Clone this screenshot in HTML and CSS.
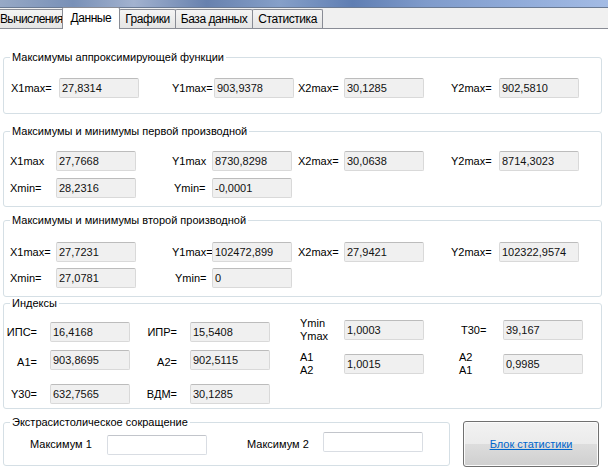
FILE: index.html
```html
<!DOCTYPE html>
<html lang="ru">
<head>
<meta charset="utf-8">
<title>Данные</title>
<link rel="stylesheet" href="styles.css">
</head>
<body>
<div class="glass"></div>
<div class="tabstrip">
  <div class="tab first">Вычисления</div>
  <div class="tab on">Данные</div>
  <div class="tab">Графики</div>
  <div class="tab">База данных</div>
  <div class="tab">Статистика</div>
</div>
<main class="page">
  <fieldset class="grp g1">
    <legend>Максимумы аппроксимирующей функции</legend>
    <div class="row">
      <span class="c1">X1max=</span><div class="box">27,8314</div>
      <span class="c2">Y1max=</span><div class="box">903,9378</div>
      <span class="c3">X2max=</span><div class="box">30,1285</div>
      <span class="c4">Y2max=</span><div class="box">902,5810</div>
    </div>
  </fieldset>

  <fieldset class="grp g2">
    <legend>Максимумы и минимумы первой производной</legend>
    <div class="rows">
      <div class="row">
        <span class="c1">X1max</span><div class="box">27,7668</div>
        <span class="c2">Y1max</span><div class="box">8730,8298</div>
        <span class="c3">X2max=</span><div class="box">30,0638</div>
        <span class="c4">Y2max=</span><div class="box">8714,3023</div>
      </div>
      <div class="row">
        <span class="c1">Xmin=</span><div class="box">28,2316</div>
        <span class="c2 in2">Ymin=</span><div class="box">-0,0001</div>
      </div>
    </div>
  </fieldset>

  <fieldset class="grp g3">
    <legend>Максимумы и минимумы второй производной</legend>
    <div class="rows">
      <div class="row">
        <span class="c1">X1max=</span><div class="box">27,7231</div>
        <span class="c2">Y1max=</span><div class="box">102472,899</div>
        <span class="c3">X2max=</span><div class="box">27,9421</div>
        <span class="c4">Y2max=</span><div class="box">102322,9574</div>
      </div>
      <div class="row">
        <span class="c1">Xmin=</span><div class="box">27,0781</div>
        <span class="c2 in3">Ymin=</span><div class="box">0</div>
      </div>
    </div>
  </fieldset>

  <fieldset class="grp g4">
    <legend>Индексы</legend>
    <div class="idx">
      <div class="col left">
        <div class="row">
          <span class="ll">ИПС=</span><div class="box">16,4168</div>
          <span class="lm">ИПР=</span><div class="box">15,5408</div>
        </div>
        <div class="row">
          <span class="ll low">A1=</span><div class="box">903,8695</div>
          <span class="lm low">A2=</span><div class="box">902,5115</div>
        </div>
        <div class="row">
          <span class="ll">Y30=</span><div class="box">632,7565</div>
          <span class="lm">ВДМ=</span><div class="box">30,1285</div>
        </div>
      </div>
      <div class="col right">
        <div class="row">
          <span class="st">Ymin<br>Ymax</span><div class="box">1,0003</div>
          <span class="lt">T30=</span><div class="box">39,167</div>
        </div>
        <div class="row">
          <span class="st">A1<br>A2</span><div class="box">1,0015</div>
          <span class="st2">A2<br>A1</span><div class="box">0,9985</div>
        </div>
      </div>
    </div>
  </fieldset>

  <div class="bottom">
    <fieldset class="grp g5">
      <legend>Экстрасистолическое сокращение</legend>
      <div class="row5">
        <span class="m1">Максимум 1</span><div class="ebox b1"></div>
        <span class="m2">Максимум 2</span><div class="ebox b2"></div>
      </div>
    </fieldset>
    <button class="btn" type="button"><span>Блок статистики</span></button>
  </div>
</main>
</body>
</html>
```

FILE: styles.css
```css
* { box-sizing: border-box; }

html, body {
  margin: 0;
  background: #fff;
}

body {
  width: 608px;
  height: 474px;
  overflow: hidden;
  font-family: "Liberation Sans", Arial, sans-serif;
  font-size: 11px;
  color: #000;
}

.glass {
  height: 8px;
  border-bottom: 1px solid #6a7a93;
  background: linear-gradient(90deg, #97a9c6 0%, #7890b7 12%, #a2b2cf 22%, #6781ae 34%, #86a0c9 46%, #5f7eb3 58%, #7f9bcb 70%, #90abd9 85%, #a3bbe4 100%);
}

.tabstrip {
  display: flex;
  align-items: flex-end;
  height: 21px;
  background: #f0f0f0;
  border-bottom: 1px solid #898c95;
}

.tab {
  height: 19px;
  padding: 1px 5px 0;
  line-height: 17px;
  border: 1px solid #898c95;
  border-bottom: 0;
  border-radius: 2px 2px 0 0;
  background: linear-gradient(#f4f4f4, #e5e5e5);
  font-size: 12px;
  letter-spacing: -0.45px;
  white-space: nowrap;
  margin-right: -1px;
}

.tab.first {
  margin-left: -6px;
  padding-right: 1px;
  letter-spacing: -0.65px;
}

.tab.on {
  position: relative;
  z-index: 1;
  height: 22px;
  margin: 0 -2px -1px;
  padding: 1px 8px 0;
  line-height: 18px;
  background: #fff;
}

.tab.on + .tab { margin-left: 1px; }

.page { display: block; }

.grp {
  margin: 0 0 0 3px;
  width: 599px;
  min-width: 0;
  padding: 0;
  border: 1px solid #d5dfe5;
  border-radius: 3px;
}

.grp legend {
  margin-left: 6px;
  padding: 0 2px;
  line-height: 13px;
  font-size: 11px;
}

.row {
  display: flex;
  align-items: center;
  height: 20px;
  white-space: nowrap;
}

.rows {
  display: flex;
  flex-direction: column;
}

.box {
  flex: none;
  width: 80px;
  height: 20px;
  padding-left: 2px;
  line-height: 18px;
  background: #f0f0f0;
  border: 1px solid #d9d9d9;
  border-top-color: #bcbcbc;
  border-radius: 2px;
  color: #111;
}

/* column labels, groups 2 and 3 */
.c1, .c2, .c3, .c4 { flex: none; }
.c1 { margin-left: 6px; width: 46px; }
.c2 { margin-left: 36px; width: 40px; }
.c3 { margin-left: 6px; width: 46px; }
.c4 { margin-left: 27px; width: 48px; }
.in2 { padding-left: 2px; }
.in3 { padding-left: 3px; }

/* group 1 */
.g1 { margin-top: 22px; padding: 14px 0 15px; }
.g1 .c1 { margin-left: 7px; width: 48px; }
.g1 .c2 { margin-left: 33px; width: 42px; }
.g1 .c3 { margin-left: 4px; width: 46px; }
.g1 .c4 { margin-left: 27px; width: 48px; }

/* group 2 */
.g2 { margin-top: 11px; padding: 13px 0 8px; }
.g2 .rows { gap: 7px; }

/* group 3 */
.g3 { margin-top: 7px; padding: 15px 0 8px; }
.g3 .rows { gap: 6px; }

/* group 4 */
.g4 { margin-top: 0; padding: 0 0 4px; }
.idx { display: flex; align-items: flex-start; }
.col { display: flex; flex-direction: column; }
.col.left { padding-top: 12px; gap: 8px; }
.col.right { padding-top: 10px; gap: 14px; }
.col.left .row:last-child { margin-top: 6px; }

.ll, .lm { flex: none; text-align: right; padding-right: 13px; }
.ll { width: 46px; }
.lm { width: 60px; }
.low { padding-top: 4px; }

.st, .st2 { flex: none; line-height: 13px; white-space: nowrap; }
.st { margin-left: 30px; width: 44px; }
.lt { flex: none; width: 79px; padding-left: 37px; }
.st2 { width: 79px; padding-left: 35px; }

/* bottom area */
.bottom {
  display: flex;
  align-items: flex-start;
  margin-top: 7px;
}

.g5 { width: 447px; padding: 3px 0 10px; }

.row5 {
  display: flex;
  align-items: flex-start;
  height: 23px;
  white-space: nowrap;
}

.m1, .m2 { flex: none; margin-top: 6px; line-height: 13px; }
.m1 { margin-left: 26px; width: 77px; }
.m2 { margin-left: 40px; width: 76px; }

.ebox {
  flex: none;
  width: 100px;
  height: 20px;
  background: #fff;
  border: 1px solid #d9dde3;
  border-top-color: #c2c5cb;
  border-radius: 2px;
}
.b1 { margin-top: 3px; }

.btn {
  flex: none;
  margin: 5px 0 0 13px;
  width: 136px;
  height: 46px;
  padding: 0;
  border: 1px solid #707070;
  border-radius: 3px;
  background: linear-gradient(#f2f2f2 0%, #ebebeb 50%, #dddddd 50%, #cfcfcf 100%);
  box-shadow: inset 0 0 0 1px #fbfbfb;
  font-family: "Liberation Sans", Arial, sans-serif;
  font-size: 11px;
  color: #0066cc;
  cursor: pointer;
}

.btn span { text-decoration: underline; }
```
